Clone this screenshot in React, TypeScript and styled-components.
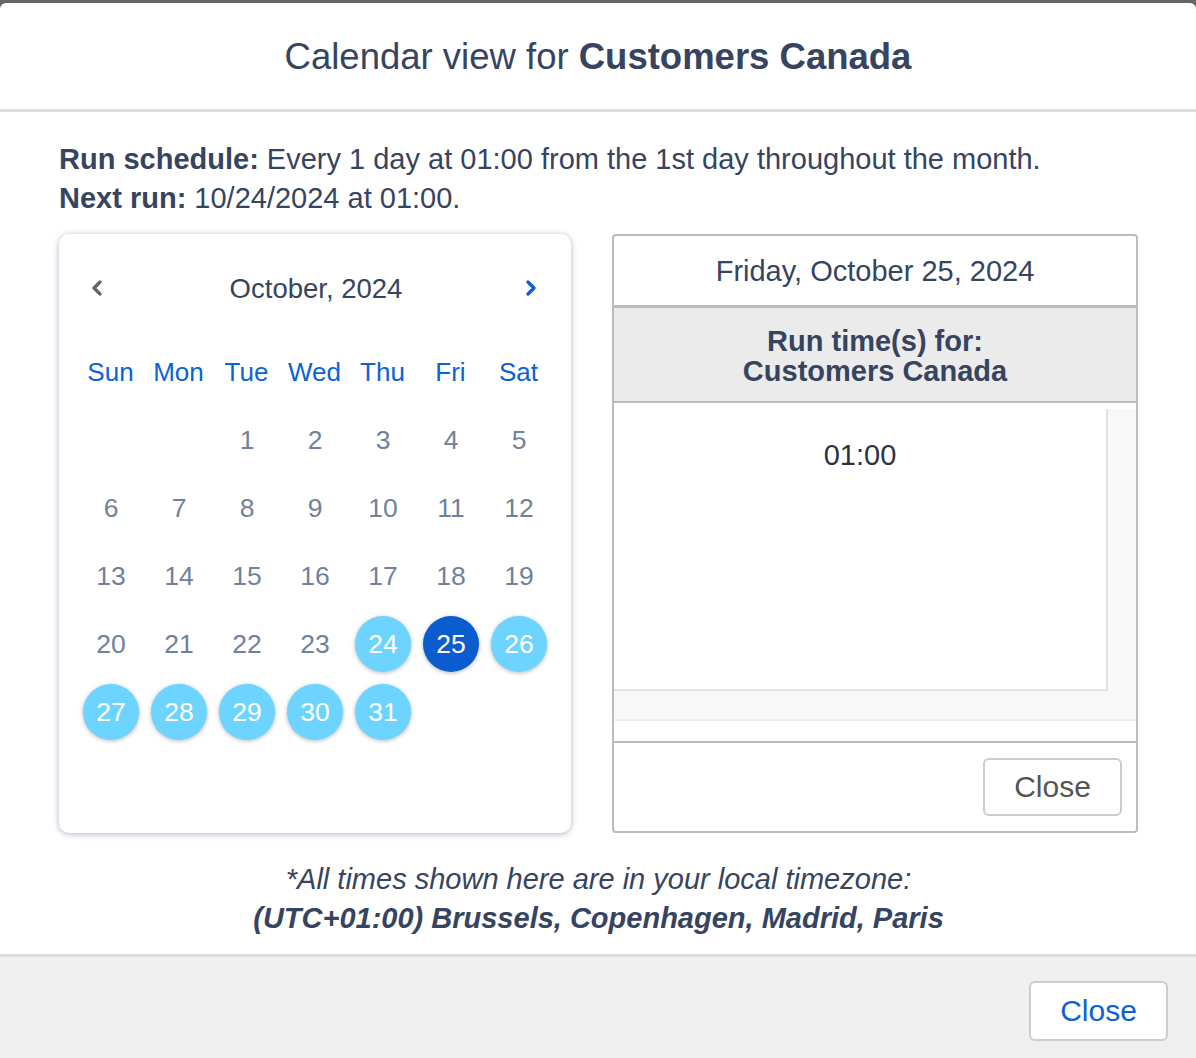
import styled, { createGlobalStyle } from 'styled-components';

const GlobalStyle = createGlobalStyle`
  html, body {
    margin: 0;
    padding: 0;
    background: #666666;
  }
  body {
    font-family: "Liberation Sans", Arial, Helvetica, sans-serif;
    color: #36445f;
  }
  * {
    box-sizing: border-box;
  }
`;

const Modal = styled.div`
  margin-top: 3px;
  background: #ffffff;
  border-radius: 6px 6px 0 0;
  overflow: hidden;
  display: flex;
  flex-direction: column;
`;

const Header = styled.header`
  height: 109px;
  border-bottom: 3px solid #dddddd;
  display: flex;
  align-items: center;
  justify-content: center;
  padding-top: 2px;
`;

const Title = styled.h1`
  margin: 0;
  font-size: 36.5px;
  font-weight: normal;
  color: #36445f;

  strong {
    font-weight: bold;
  }
`;

const Body = styled.section`
  padding: 28px 58px 16px 59px;
`;

const Info = styled.p`
  margin: 0;
  font-size: 29px;
  line-height: 39px;
  color: #36445f;

  strong {
    font-weight: bold;
  }
`;

const Columns = styled.div`
  display: grid;
  grid-template-columns: 512px 1fr;
  gap: 41px;
  margin-top: 16px;
`;

const CalendarCard = styled.div`
  background: #ffffff;
  border-radius: 10px;
  box-shadow: 0 1px 6px rgba(70, 90, 130, 0.45);
  padding: 18px 18px 19px 18px;
`;

const MonthBar = styled.div`
  height: 72px;
  margin-bottom: 14px;
  display: flex;
  align-items: center;
  justify-content: space-between;
  padding: 0 12px 0 10px;
`;

const MonthTitle = styled.div`
  font-size: 27.5px;
  color: #36445f;
  padding-left: 4px;
  padding-top: 2px;
`;

const NavButton = styled.button<{ $active?: boolean }>`
  border: none;
  background: none;
  padding: 0;
  width: 20px;
  height: 24px;
  display: flex;
  align-items: center;
  justify-content: center;
  color: ${({ $active }) => ($active ? '#0b62d6' : '#666666')};
  cursor: pointer;
`;

const DayGrid = styled.div`
  display: grid;
  grid-template-columns: repeat(7, 68px);
  grid-auto-rows: 68px;
`;

const WeekDay = styled.div`
  display: flex;
  align-items: center;
  justify-content: center;
  font-size: 26px;
  color: #0b62d6;
  padding-right: 1px;
`;

const DayCell = styled.div`
  display: flex;
  align-items: center;
  justify-content: center;
`;

const DayNumber = styled.span<{ $state: 'plain' | 'run' | 'selected' }>`
  width: 56px;
  height: 56px;
  border-radius: 50%;
  display: flex;
  align-items: center;
  justify-content: center;
  font-size: 26.5px;
  color: ${({ $state }) => ($state === 'plain' ? '#71819c' : '#ffffff')};
  background: ${({ $state }) =>
    $state === 'selected' ? '#0b5cce' : $state === 'run' ? '#6cd4ff' : 'transparent'};
  box-shadow: ${({ $state }) =>
    $state === 'plain' ? 'none' : '0 1px 4px rgba(60, 70, 90, 0.4)'};
`;

const RunPanel = styled.div`
  border: 2px solid #bbbbbb;
  border-radius: 4px;
  display: flex;
  flex-direction: column;
  background: #ffffff;
`;

const DateHead = styled.div`
  height: 72px;
  border-bottom: 3px solid #bbbbbb;
  display: flex;
  align-items: center;
  justify-content: center;
  font-size: 29px;
  padding-top: 1px;
`;

const RunHead = styled.div`
  height: 95px;
  background: #ebebeb;
  border-bottom: 2px solid #bbbbbb;
  display: flex;
  align-items: center;
  justify-content: center;
  text-align: center;
  font-size: 29px;
  line-height: 30px;
  font-weight: bold;
  padding-top: 3px;
`;

const ListArea = styled.div`
  height: 340px;
  padding-top: 6px;
  border-bottom: 2px solid #bbbbbb;
`;

const Scroller = styled.div`
  background: #f8f8f8;
  padding: 0 28px 28px 0;
  border-bottom: 2px solid #eeeeee;
`;

const TimeList = styled.div`
  height: 282px;
  background: #ffffff;
  border-right: 2px solid #e2e2e2;
  border-bottom: 2px solid #e2e2e2;
  padding-top: 27px;
  text-align: center;
  font-size: 29px;
  line-height: 39px;
  color: #2b3445;
`;

const PanelFooter = styled.div`
  flex: 1;
  display: flex;
  justify-content: flex-end;
  align-items: flex-start;
  padding: 15px 14px 0 0;
`;

const Button = styled.button<{ $primary?: boolean }>`
  width: 139px;
  height: ${({ $primary }) => ($primary ? '60px' : '58px')};
  border: 2px solid #cccccc;
  border-radius: 6px;
  background: #ffffff;
  font-family: "Liberation Sans", Arial, sans-serif;
  font-size: 30px;
  color: ${({ $primary }) => ($primary ? '#0b62d6' : '#555555')};
  cursor: pointer;
`;

const Note = styled.p`
  margin: 27px 0 0 0;
  text-align: center;
  font-size: 29px;
  line-height: 39px;
  font-style: italic;
  color: #36445f;

  strong {
    font-weight: bold;
  }
`;

const Footer = styled.footer`
  border-top: 3px solid #dddddd;
  background: #efefef;
  display: flex;
  justify-content: flex-end;
  padding: 24px 28px 18px 0;
`;

const Chevron = ({ dir }: { dir: 'left' | 'right' }) => (
  <svg width="12" height="18" viewBox="0 0 12 18" fill="none">
    <polyline
      points={dir === 'left' ? '9,3 3,9 9,15' : '3,3 9,9 3,15'}
      stroke="currentColor"
      strokeWidth="3.4"
      strokeLinecap="round"
      strokeLinejoin="round"
    />
  </svg>
);

const weekDays = ['Sun', 'Mon', 'Tue', 'Wed', 'Thu', 'Fri', 'Sat'];
const firstOffset = 2;
const daysInMonth = 31;

const dayState = (d: number): 'plain' | 'run' | 'selected' => {
  if (d === 25) return 'selected';
  if (d >= 24) return 'run';
  return 'plain';
};

const Calendar = () => {
  const cells: (number | null)[] = [];
  for (let i = 0; i < firstOffset; i++) cells.push(null);
  for (let d = 1; d <= daysInMonth; d++) cells.push(d);
  while (cells.length < 42) cells.push(null);

  return (
    <CalendarCard>
      <MonthBar>
        <NavButton aria-label="Previous month">
          <Chevron dir="left" />
        </NavButton>
        <MonthTitle>October, 2024</MonthTitle>
        <NavButton $active aria-label="Next month">
          <Chevron dir="right" />
        </NavButton>
      </MonthBar>
      <DayGrid>
        {weekDays.map((w) => (
          <WeekDay key={w}>{w}</WeekDay>
        ))}
        {cells.map((d, i) => (
          <DayCell key={i}>
            {d !== null && <DayNumber $state={dayState(d)}>{d}</DayNumber>}
          </DayCell>
        ))}
      </DayGrid>
    </CalendarCard>
  );
};

const RunTimes = () => (
  <RunPanel>
    <DateHead>Friday, October 25, 2024</DateHead>
    <RunHead>
      Run time(s) for:
      <br />
      Customers Canada
    </RunHead>
    <ListArea>
      <Scroller>
        <TimeList>01:00</TimeList>
      </Scroller>
    </ListArea>
    <PanelFooter>
      <Button>Close</Button>
    </PanelFooter>
  </RunPanel>
);

export default function App() {
  return (
    <>
      <GlobalStyle />
      <Modal>
        <Header>
          <Title>
            Calendar view for <strong>Customers Canada</strong>
          </Title>
        </Header>
        <Body>
          <Info>
            <strong>Run schedule:</strong> Every 1 day at 01:00 from the 1st day throughout the
            month.
          </Info>
          <Info>
            <strong>Next run:</strong> 10/24/2024 at 01:00.
          </Info>
          <Columns>
            <Calendar />
            <RunTimes />
          </Columns>
          <Note>
            *All times shown here are in your local timezone:
            <br />
            <strong>(UTC+01:00) Brussels, Copenhagen, Madrid, Paris</strong>
          </Note>
        </Body>
        <Footer>
          <Button $primary>Close</Button>
        </Footer>
      </Modal>
    </>
  );
}
